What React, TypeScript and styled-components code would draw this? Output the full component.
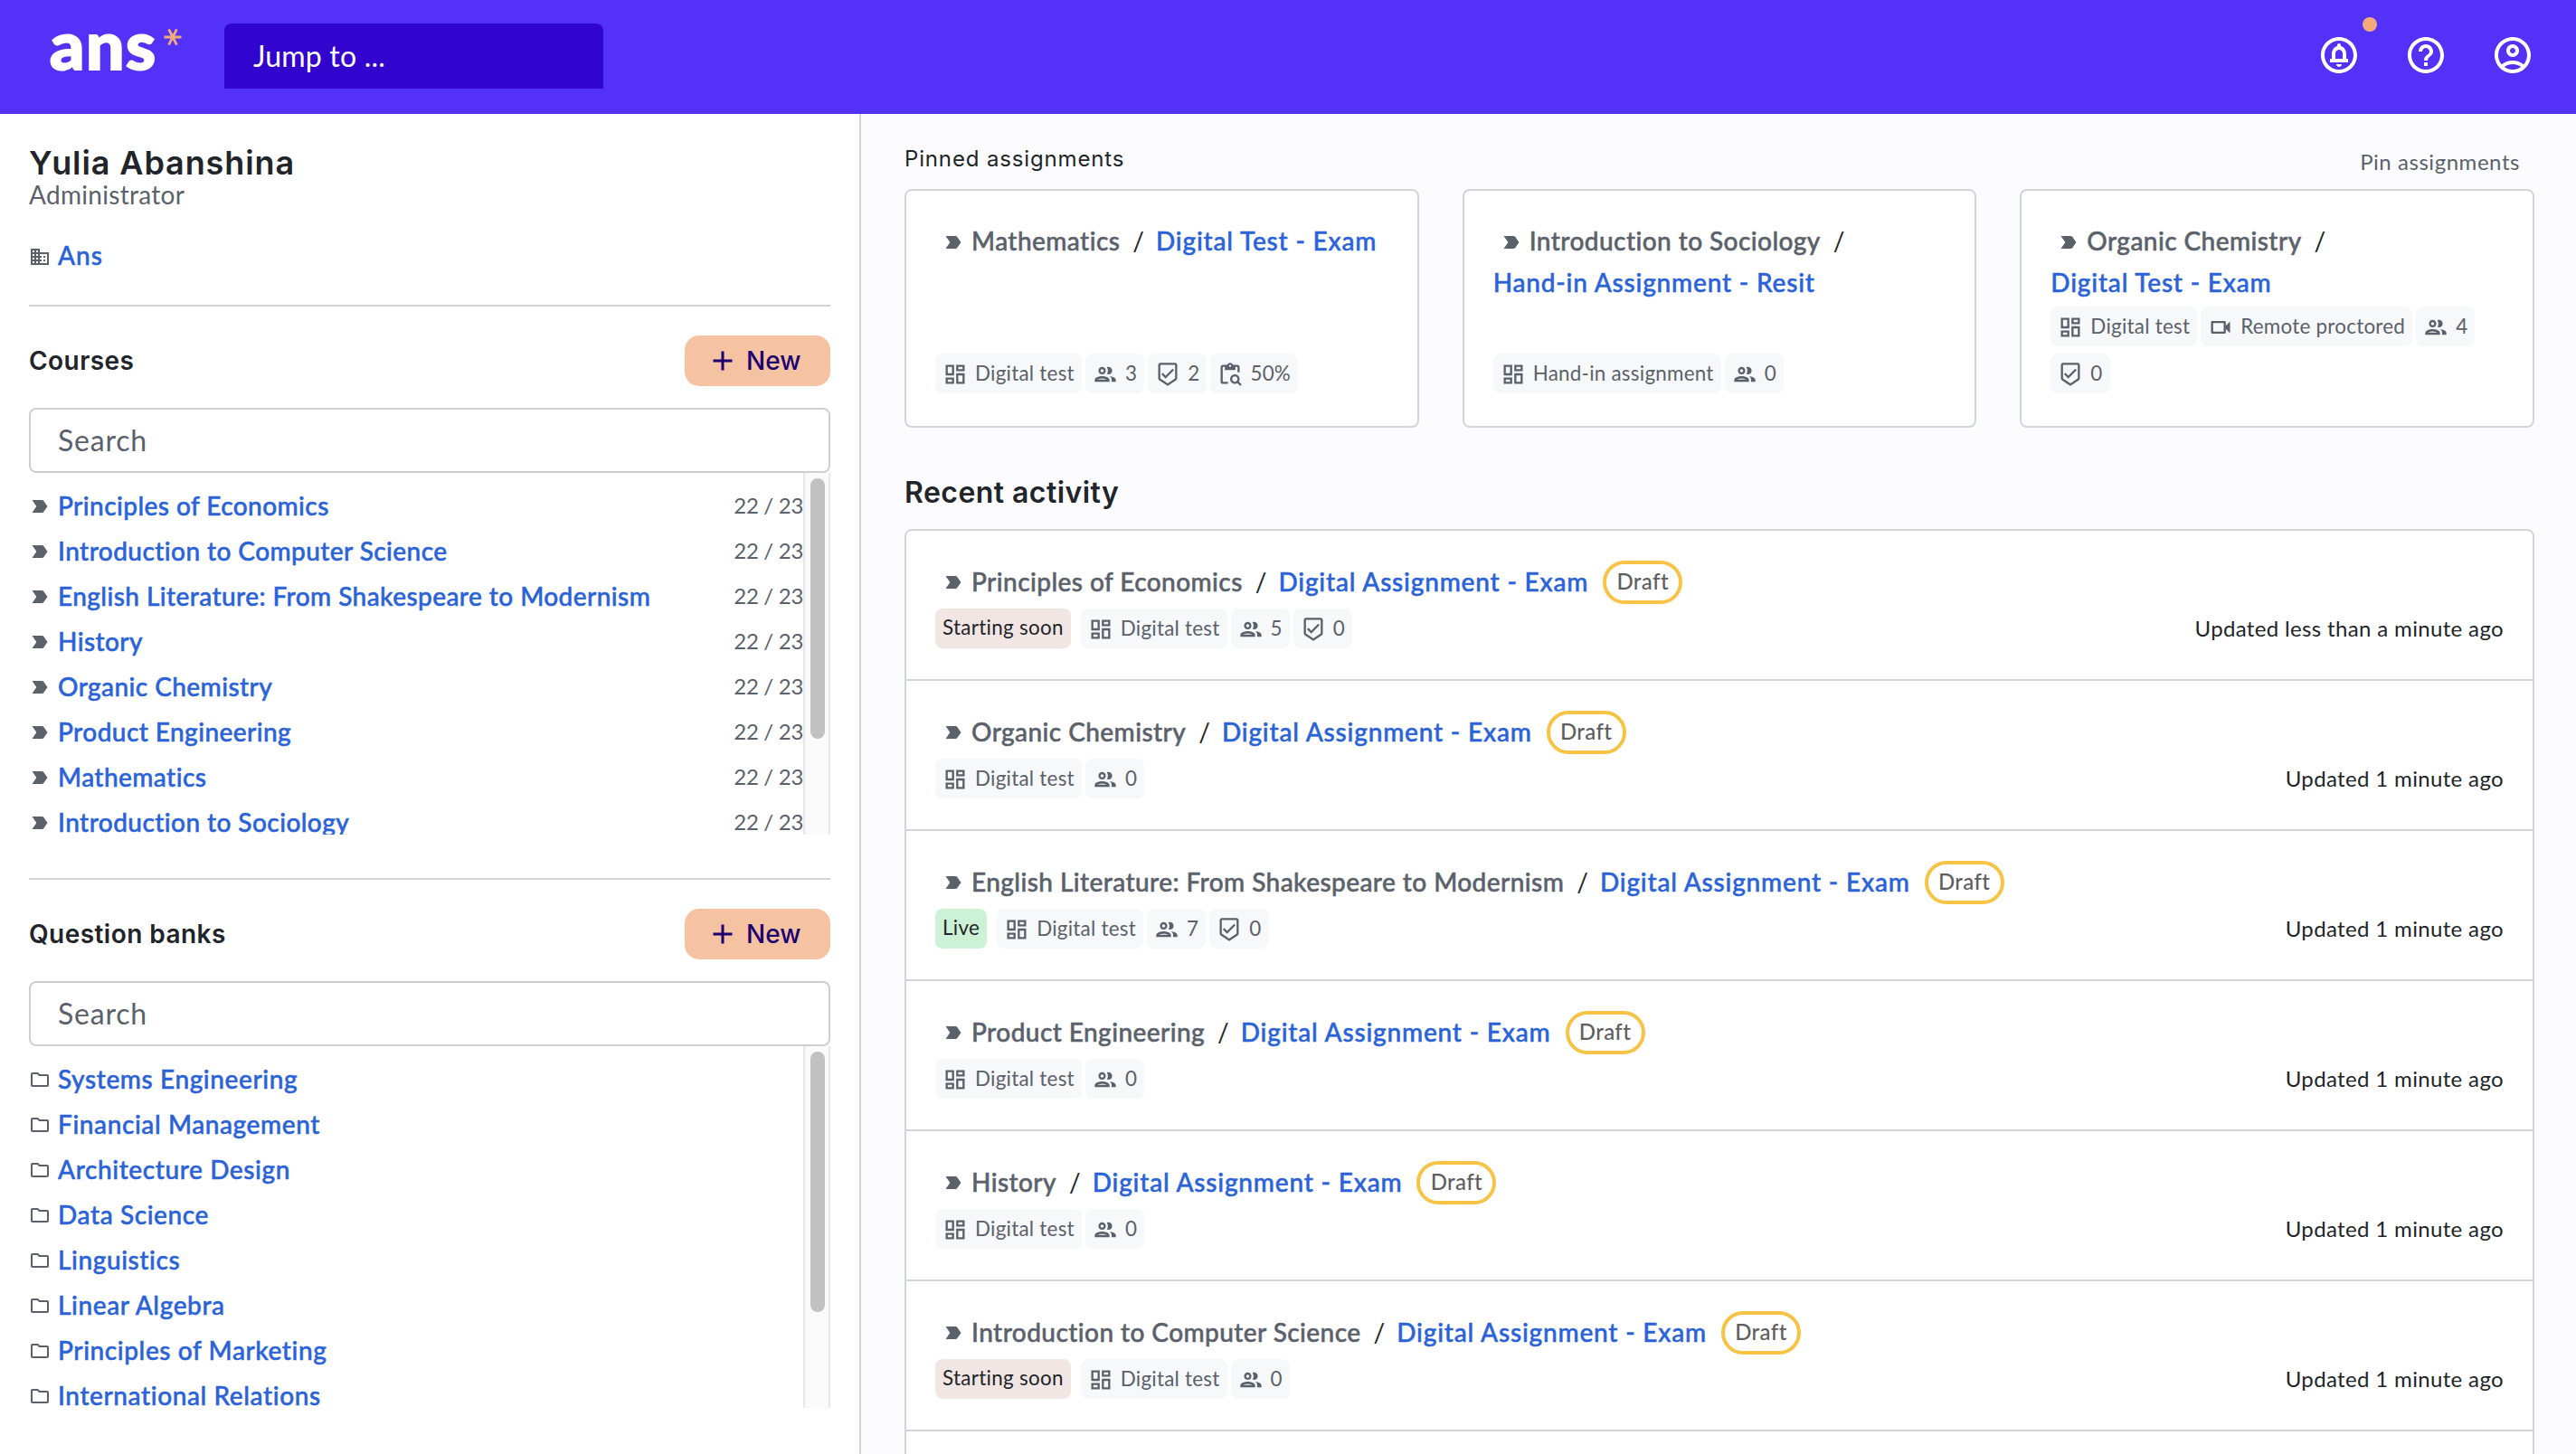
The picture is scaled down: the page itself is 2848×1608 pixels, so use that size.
import React from 'react';
import styled, { createGlobalStyle } from 'styled-components';
import {
  MdAdd,
  MdContentPasteSearch,
  MdDomain,
  MdHelpOutline,
  MdLabelImportant,
  MdOutlineAccountCircle,
  MdOutlineBeenhere,
  MdOutlineCircleNotifications,
  MdOutlineDashboard,
  MdOutlineFolder,
  MdOutlineGroup,
  MdOutlineVideocam,
} from 'react-icons/md';

const purple = '#5331f6';
const deepPurple = '#3205cf';
const peach = '#f4a97c';
const lightPeach = '#f5c2a2';
const ink = '#212529';
const mutedGrey = '#5a616b';
const linkBlue = '#2a62d8';
const borderGrey = '#d0d5da';
const chipGrey = '#f7f8fa';
const bodyFont = `Lato, 'Noto Sans', sans-serif`;
const headFont = `Inter, 'Noto Sans', sans-serif`;

const courses = [
  'Principles of Economics',
  'Introduction to Computer Science',
  'English Literature: From Shakespeare to Modernism',
  'History',
  'Organic Chemistry',
  'Product Engineering',
  'Mathematics',
  'Introduction to Sociology',
];

const banks = [
  'Systems Engineering',
  'Financial Management',
  'Architecture Design',
  'Data Science',
  'Linguistics',
  'Linear Algebra',
  'Principles of Marketing',
  'International Relations',
];

type ChipKind = 'type' | 'users' | 'graded' | 'review' | 'proctored';
type ChipData = [ChipKind, string];

const chipIcons = {
  type: MdOutlineDashboard,
  users: MdOutlineGroup,
  graded: MdOutlineBeenhere,
  review: MdContentPasteSearch,
  proctored: MdOutlineVideocam,
};

const pinned: { course: string; name: string; chips: ChipData[] }[] = [
  {
    course: 'Mathematics',
    name: 'Digital Test - Exam',
    chips: [
      ['type', 'Digital test'],
      ['users', '3'],
      ['graded', '2'],
      ['review', '50%'],
    ],
  },
  {
    course: 'Introduction to Sociology',
    name: 'Hand-in Assignment - Resit',
    chips: [
      ['type', 'Hand-in assignment'],
      ['users', '0'],
    ],
  },
  {
    course: 'Organic Chemistry',
    name: 'Digital Test - Exam',
    chips: [
      ['type', 'Digital test'],
      ['proctored', 'Remote proctored'],
      ['users', '4'],
      ['graded', '0'],
    ],
  },
];

interface Activity {
  course: string;
  status?: 'Starting soon' | 'Live';
  users: string;
  graded?: string;
  updated: string;
}

const activities: Activity[] = [
  {
    course: 'Principles of Economics',
    status: 'Starting soon',
    users: '5',
    graded: '0',
    updated: 'Updated less than a minute ago',
  },
  { course: 'Organic Chemistry', users: '0', updated: 'Updated 1 minute ago' },
  {
    course: 'English Literature: From Shakespeare to Modernism',
    status: 'Live',
    users: '7',
    graded: '0',
    updated: 'Updated 1 minute ago',
  },
  { course: 'Product Engineering', users: '0', updated: 'Updated 1 minute ago' },
  { course: 'History', users: '0', updated: 'Updated 1 minute ago' },
  {
    course: 'Introduction to Computer Science',
    status: 'Starting soon',
    users: '0',
    updated: 'Updated 1 minute ago',
  },
];

const Chips = ({ items }: { items: ChipData[] }) => (
  <>
    {items.map(([kind, label]) => {
      const Icon = chipIcons[kind];
      return (
        <Chip key={kind}>
          <Icon />
          <ChipLabel>{label}</ChipLabel>
        </Chip>
      );
    })}
  </>
);

const SidebarSection = ({
  title,
  items,
  kind,
}: {
  title: string;
  items: string[];
  kind: 'course' | 'bank';
}) => (
  <Section>
    <SectionHead>
      <SectionTitle>{title}</SectionTitle>
      <NewButton>
        <MdAdd />
        <span>New</span>
      </NewButton>
    </SectionHead>
    <SearchInput type='text' placeholder='Search' />
    <ListWrap>
      <List>
        {items.map((item) => (
          <ListRow key={item}>
            {kind === 'course' ? <MdLabelImportant /> : <MdOutlineFolder />}
            <RowLink $wide={kind === 'bank'}>{item}</RowLink>
            {kind === 'course' && <RowCount>22 / 23</RowCount>}
          </ListRow>
        ))}
      </List>
      <ScrollTrack>
        <ScrollThumb />
      </ScrollTrack>
    </ListWrap>
  </Section>
);

export default function App(): JSX.Element {
  return (
    <Page>
      <GlobalStyle />
      <Header>
        <Logo>
          ans
          <Star viewBox='0 0 20 20'>
            <path d='M0.5 10h19M5.6 1.4l8.8 17.2M14.4 1.4L5.6 18.6' />
          </Star>
        </Logo>
        <JumpInput type='text' placeholder='Jump to ...' />
        <HeaderActions>
          <HeaderAction>
            <MdOutlineCircleNotifications />
            <NoticeDot />
          </HeaderAction>
          <HeaderAction>
            <MdHelpOutline />
          </HeaderAction>
          <HeaderAction>
            <MdOutlineAccountCircle />
          </HeaderAction>
        </HeaderActions>
      </Header>
      <Body>
        <Sidebar>
          <UserName>Yulia Abanshina</UserName>
          <UserRole>Administrator</UserRole>
          <School>
            <MdDomain />
            <SchoolLink>Ans</SchoolLink>
          </School>
          <SidebarSection title='Courses' items={courses} kind='course' />
          <SidebarSection title='Question banks' items={banks} kind='bank' />
        </Sidebar>
        <Main>
          <PinnedHead>
            <PinnedTitle>Pinned assignments</PinnedTitle>
            <PinLink>Pin assignments</PinLink>
          </PinnedHead>
          <PinnedGrid>
            {pinned.map((card) => (
              <Card key={card.course}>
                <CardTitle>
                  <MdLabelImportant />
                  <CourseName>{card.course}</CourseName>
                  <Slash>/</Slash>
                  <wbr />
                  <AssignmentLink>{card.name}</AssignmentLink>
                </CardTitle>
                <CardChips>
                  <Chips items={card.chips} />
                </CardChips>
              </Card>
            ))}
          </PinnedGrid>
          <RecentTitle>Recent activity</RecentTitle>
          <ActivityList>
            {activities.map((a) => (
              <ActivityRow key={a.course}>
                <ActivityTitle>
                  <MdLabelImportant />
                  <ActivityText>
                    <CourseName>{a.course}</CourseName>
                    <Slash>/</Slash>
                    <AssignmentLink>Digital Assignment - Exam</AssignmentLink>
                  </ActivityText>
                  <DraftPill>Draft</DraftPill>
                </ActivityTitle>
                <ActivityMeta>
                  {a.status && <Status $live={a.status === 'Live'}>{a.status}</Status>}
                  <Chips
                    items={[
                      ['type', 'Digital test'],
                      ['users', a.users],
                      ...(a.graded ? ([['graded', a.graded]] as ChipData[]) : []),
                    ]}
                  />
                  <Updated>{a.updated}</Updated>
                </ActivityMeta>
              </ActivityRow>
            ))}
          </ActivityList>
        </Main>
      </Body>
    </Page>
  );
}

const GlobalStyle = createGlobalStyle`
  * {
    box-sizing: border-box;
  }
  body {
    margin: 0;
    font-family: ${bodyFont};
    font-size: 28px;
    color: ${ink};
    background-color: #fff;
  }
`;

const Page = styled.div`
  display: flex;
  flex-direction: column;
  height: 1608px;
  overflow: hidden;
`;

const Header = styled.header`
  display: flex;
  align-items: flex-start;
  flex: none;
  height: 126px;
  padding: 0 46px 0 55px;
  background-color: ${purple};
`;

const Logo = styled.div`
  display: flex;
  width: 193px;
  font-size: 75px;
  font-weight: 900;
  line-height: 96px;
  letter-spacing: 1.5px;
  color: #fff;
  -webkit-text-stroke: 2px #fff;
`;

const Star = styled.svg`
  width: 20px;
  height: 20px;
  margin: 31px 0 0 7px;
  fill: none;
  stroke: ${peach};
  stroke-width: 2.8;
`;

const JumpInput = styled.input`
  width: 419px;
  height: 72px;
  margin-top: 26px;
  padding: 0 32px 2px;
  border: 0;
  border-radius: 8px 8px 0 0;
  background-color: ${deepPurple};
  font-family: ${bodyFont};
  font-size: 32px;
  letter-spacing: 0.2px;

  &::placeholder {
    color: #fff;
  }
`;

const HeaderActions = styled.nav`
  display: flex;
  gap: 48px;
  margin: 37px 0 0 auto;
`;

const HeaderAction = styled.div`
  position: relative;
  width: 48px;
  height: 48px;

  svg {
    display: block;
    width: 48px;
    height: 48px;
    color: #fff;
  }
`;

const NoticeDot = styled.span`
  position: absolute;
  top: -18px;
  left: 50px;
  width: 16px;
  height: 16px;
  border-radius: 50%;
  background-color: ${peach};
`;

const Body = styled.div`
  display: flex;
  flex: 1;
  min-height: 0;
`;

const Sidebar = styled.aside`
  flex: none;
  width: 952px;
  padding: 34px 32px 0;
  border-right: 2px solid ${borderGrey};
`;

const UserName = styled.h1`
  margin: 0;
  font-family: ${headFont};
  font-size: 36px;
  font-weight: 600;
  line-height: 40px;
  letter-spacing: 0.9px;
`;

const UserRole = styled.div`
  line-height: 30px;
  letter-spacing: 0.3px;
  color: ${mutedGrey};
`;

const School = styled.div`
  display: flex;
  align-items: center;
  gap: 8px;
  height: 32px;
  margin-top: 36px;

  svg {
    width: 24px;
    height: 24px;
    margin-top: 4px;
    color: ${mutedGrey};
  }
`;

const SchoolLink = styled.a`
  font-weight: 500;
  letter-spacing: 1px;
  color: ${linkBlue};
  -webkit-text-stroke: 0.5px;
`;

const Section = styled.section`
  margin-top: 39px;
  padding-top: 32px;
  border-top: 2px solid ${borderGrey};

  & + & {
    margin-top: 48px;
  }
`;

const SectionHead = styled.div`
  display: flex;
  align-items: center;
  justify-content: space-between;
  height: 56px;
`;

const SectionTitle = styled.h2`
  margin: 0;
  padding-bottom: 1px;
  font-family: ${headFont};
  font-size: 28px;
  font-weight: 600;
  letter-spacing: 0.45px;
`;

const NewButton = styled.button`
  display: flex;
  align-items: center;
  gap: 8px;
  width: 161px;
  height: 56px;
  padding: 0 24px;
  border: 0;
  border-radius: 16px;
  background-color: ${lightPeach};
  color: #1c0070;
  font-family: ${headFont};
  font-size: 28px;
  font-weight: 500;

  svg {
    width: 36px;
    height: 36px;
  }
  span {
    padding-bottom: 1px;
  }
`;

const SearchInput = styled.input`
  display: block;
  width: 100%;
  height: 72px;
  margin-top: 24px;
  padding: 0 30px 2px;
  border: 2px solid #cfcfcf;
  border-radius: 8px;
  font-family: ${bodyFont};
  font-size: 32px;
  letter-spacing: 0.8px;

  &::placeholder {
    color: ${mutedGrey};
  }
`;

const ListWrap = styled.div`
  display: flex;
  height: 400px;
  overflow: hidden;
`;

const List = styled.div`
  flex: 1;
  padding-top: 12px;
`;

const ListRow = styled.div`
  display: flex;
  align-items: center;
  gap: 8px;
  height: 50px;

  svg {
    flex: none;
    width: 24px;
    height: 24px;
    color: ${mutedGrey};
  }
`;

const RowLink = styled.a<{ $wide: boolean }>`
  padding-bottom: 3px;
  font-weight: 500;
  letter-spacing: ${(p) => (p.$wide ? '0.6px' : '0.43px')};
  color: ${linkBlue};
  -webkit-text-stroke: 0.5px;
`;

const RowCount = styled.span`
  margin-left: auto;
  padding-bottom: 3px;
  font-size: 24px;
  letter-spacing: -0.3px;
  color: ${mutedGrey};
`;

const ScrollTrack = styled.div`
  flex: none;
  width: 30px;
  padding: 6px 0 0 6px;
  border: solid #e8e8e8;
  border-width: 0 2px;
  background-color: #fafafa;
`;

const ScrollThumb = styled.div`
  width: 16px;
  height: 288px;
  border-radius: 8px;
  background-color: #c1c1c1;
`;

const Main = styled.main`
  flex: 1;
  min-width: 0;
  padding: 0 46px 0 48px;
  background-color: #fcfcfe;
`;

const PinnedHead = styled.div`
  display: flex;
  align-items: flex-end;
  justify-content: space-between;
  height: 83px;
  line-height: 34px;
`;

const PinnedTitle = styled.h2`
  margin: 0 0 16px;
  font-family: ${headFont};
  font-size: 24px;
  font-weight: 400;
  letter-spacing: 0.85px;
`;

const PinLink = styled.a`
  margin: 0 16px 13px 0;
  font-size: 24px;
  letter-spacing: 0.55px;
  color: ${mutedGrey};
`;

const PinnedGrid = styled.div`
  display: grid;
  grid-template-columns: repeat(3, 1fr);
  gap: 48px;
`;

const Card = styled.article`
  display: flex;
  flex-direction: column;
  justify-content: space-between;
  height: 264px;
  padding: 32px 32px 36px;
  border: 2px solid ${borderGrey};
  border-radius: 8px;
  background-color: #fff;
`;

const CardTitle = styled.div`
  line-height: 46px;

  svg {
    width: 24px;
    height: 24px;
    margin: 0 8px;
    vertical-align: -3px;
    color: ${mutedGrey};
  }
`;

const CourseName = styled.span`
  font-weight: 500;
  letter-spacing: 0.43px;
  color: ${mutedGrey};
  -webkit-text-stroke: 0.5px;
`;

const Slash = styled.span`
  margin: 0 13px 0 14px;
`;

const AssignmentLink = styled.a`
  font-weight: 500;
  letter-spacing: 0.82px;
  white-space: nowrap;
  color: ${linkBlue};
  -webkit-text-stroke: 0.5px;
`;

const CardChips = styled.div`
  display: flex;
  flex-wrap: wrap;
  gap: 8px 4px;
`;

const Chip = styled.span`
  display: flex;
  align-items: center;
  gap: 8px;
  height: 44px;
  padding: 0 8px;
  border-radius: 8px;
  background-color: ${chipGrey};
  color: ${mutedGrey};

  svg {
    width: 28px;
    height: 28px;
    margin-top: 2px;
  }
`;

const ChipLabel = styled.span`
  padding-bottom: 2px;
  font-size: 22.4px;
  letter-spacing: 0.25px;
`;

const RecentTitle = styled.h2`
  margin: 52px 0 20px;
  font-family: ${headFont};
  font-size: 32px;
  font-weight: 600;
  line-height: 40px;
  letter-spacing: 0.45px;
`;

const ActivityList = styled.div`
  height: 1100px;
  border: 2px solid ${borderGrey};
  border-radius: 8px;
  background-color: #fff;
`;

const ActivityRow = styled.div`
  height: 166px;
  padding: 33px 32px 0;
  border-bottom: 2px solid ${borderGrey};
`;

const ActivityTitle = styled.div`
  display: flex;
  align-items: center;
  height: 48px;

  svg {
    width: 24px;
    height: 24px;
    margin: 0 8px;
    color: ${mutedGrey};
  }
`;

const ActivityText = styled.div`
  padding-bottom: 3px;
`;

const DraftPill = styled.span`
  width: 88px;
  height: 48px;
  margin-left: 16px;
  border: 4px solid #f7c344;
  border-radius: 24px;
  font-size: 24px;
  font-weight: 500;
  line-height: 38px;
  text-align: center;
  letter-spacing: 0.4px;
  color: #5e5e5e;
`;

const ActivityMeta = styled.div`
  display: flex;
  align-items: center;
  gap: 4px;
  margin-top: 5px;
`;

const Status = styled.span<{ $live: boolean }>`
  height: 44px;
  margin-right: 7px;
  padding: 0 8px;
  border-radius: 8px;
  background-color: ${(p) => (p.$live ? '#cdf1d5' : '#f2e6e4')};
  font-size: 22.4px;
  line-height: 42px;
  letter-spacing: 0.3px;
`;

const Updated = styled.span`
  margin-left: auto;
  padding-bottom: 2px;
  font-size: 24px;
  letter-spacing: 0.35px;
`;
